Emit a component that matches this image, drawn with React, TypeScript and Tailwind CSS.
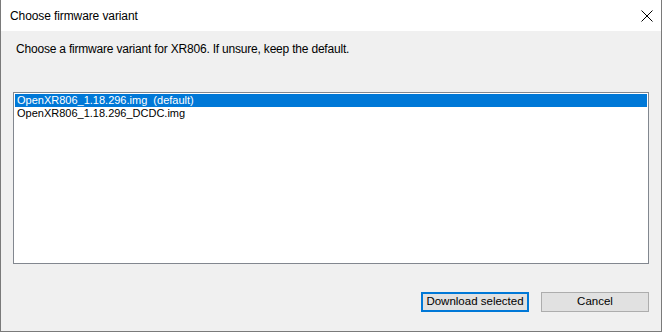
const variants = [
  { name: "OpenXR806_1.18.296.img  (default)", selected: true },
  { name: "OpenXR806_1.18.296_DCDC.img", selected: false },
];

function CloseIcon() {
  return (
    <svg width="12" height="12" viewBox="0 0 12 12" className="mr-[8px]">
      <path d="M0.5 0.5 L11.5 11.5 M11.5 0.5 L0.5 11.5" stroke="#000" strokeWidth="1" fill="none" />
    </svg>
  );
}

export default function App() {
  return (
    <div className="flex h-[332px] w-[662px] flex-col border border-t-0 border-[#7a7a7a] bg-[#f0f0f0] font-['Liberation_Sans',Arial,sans-serif] text-[12px] text-black">
      <div className="flex h-[31px] shrink-0 items-center justify-between bg-white pl-[9px]">
        <span className="text-[12px] tracking-[-0.1px]">Choose firmware variant</span>
        <CloseIcon />
      </div>
      <p className="ml-[15px] mt-[11px] leading-[15px] tracking-[-0.2px]">
        Choose a firmware variant for XR806. If unsure, keep the default.
      </p>
      <div className="ml-[12px] mt-[35px] h-[172px] w-[636px] border border-[#82878f] bg-white p-[1px]">
        {variants.map((v) => (
          <div
            key={v.name}
            className={`h-[13px] whitespace-pre pl-[2px] text-[11px] leading-[13px] ${v.selected ? "bg-[#0078d7] text-white" : ""}`}
          >
            {v.name}
          </div>
        ))}
      </div>
      <div className="mt-[28px] flex justify-end gap-[12px] pr-[12px]">
        <button className="h-[20px] w-[108px] border-2 border-[#0078d7] bg-[#e1e1e1] text-[11.5px] leading-none">
          Download selected
        </button>
        <button className="h-[20px] w-[108px] border border-[#adadad] bg-[#e1e1e1] text-[11.5px] leading-none">
          Cancel
        </button>
      </div>
    </div>
  );
}
